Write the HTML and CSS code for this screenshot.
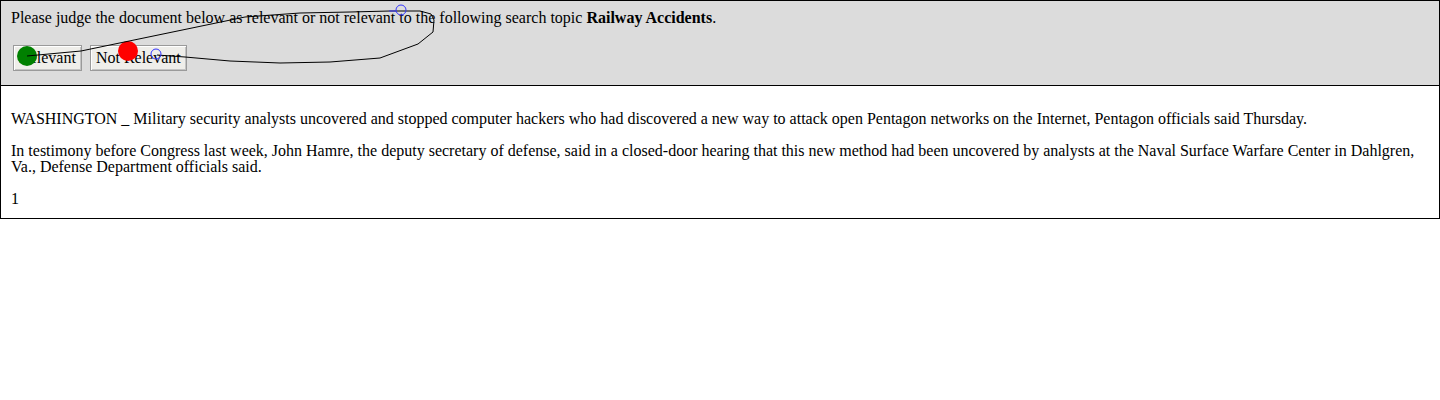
FILE: index.html
```html
<!DOCTYPE html>
<html>
<head>
<meta charset="utf-8">
<title>Relevance judgement</title>
<link rel="stylesheet" href="styles.css">
</head>
<body>
<div class="topic">
  <p class="prompt">Please judge the document below as relevant or not relevant to the following search topic <b>Railway Accidents</b>.</p>
  <div class="actions">
    <button class="btn">Relevant</button>
    <button class="btn">Not Relevant</button>
  </div>
</div>
<div class="doc">
  <p>WASHINGTON _ Military security analysts uncovered and stopped computer hackers who had discovered a new way to attack open Pentagon networks on the Internet, Pentagon officials said Thursday.</p>
  <p>In testimony before Congress last week, John Hamre, the deputy secretary of defense, said in a closed-door hearing that this new method had been uncovered by analysts at the Naval Surface Warfare Center in Dahlgren, Va., Defense Department officials said.</p>
  <p class="last">1</p>
</div>
<svg class="trace" width="1440" height="400" viewBox="0 0 1440 400">
  <circle cx="27" cy="56" r="10" fill="#008000"/>
  <circle cx="128" cy="51" r="10" fill="#ff0000"/>
  <polyline fill="none" stroke="#000" stroke-width="1" points="27,56 81,51 163,34 245,17 300,13 350,12 390,11 420,11 431,14 434,20 433,32 418,44 380,58 330,62 280,63 230,61 185,57 157,55"/>
  <line x1="389" y1="11" x2="396" y2="11" stroke="#3333ff" stroke-width="1"/>
  <circle cx="401" cy="10" r="5" fill="none" stroke="#3333ff" stroke-width="1"/>
  <circle cx="156" cy="54" r="5" fill="none" stroke="#3333ff" stroke-width="1"/>
</svg>
</body>
</html>
```
FILE: styles.css
```css
html, body {
  margin: 0;
  padding: 0;
  background: #fff;
}
body {
  font-family: "Liberation Serif", "Times New Roman", serif;
  font-size: 16px;
  line-height: 16px;
  color: #000;
  position: relative;
}
.topic {
  background: #dcdcdc;
  border: 1px solid #000;
  padding: 9px 10px 14px 10px;
}
.prompt {
  margin: 0;
}
.actions {
  display: flex;
  gap: 8px;
  margin-top: 19px;
  padding-left: 2px;
}
.btn {
  height: 26px;
  padding: 0 5px;
  font-family: "Liberation Serif", "Times New Roman", serif;
  font-size: 16px;
  color: #000;
  background: #efeeea;
  border: 1px solid #9a9a9a;
  box-shadow: inset 1px 1px 0 #fff, inset -1px -1px 0 #c4c4c4;
}
.doc {
  border: 1px solid #000;
  border-top: none;
  padding: 9px 10px 11px 10px;
}
.doc p {
  margin: 16px 0;
}
.doc p.last {
  margin-bottom: 0;
}
.trace {
  position: absolute;
  left: 0;
  top: 0;
  pointer-events: none;
}
```
